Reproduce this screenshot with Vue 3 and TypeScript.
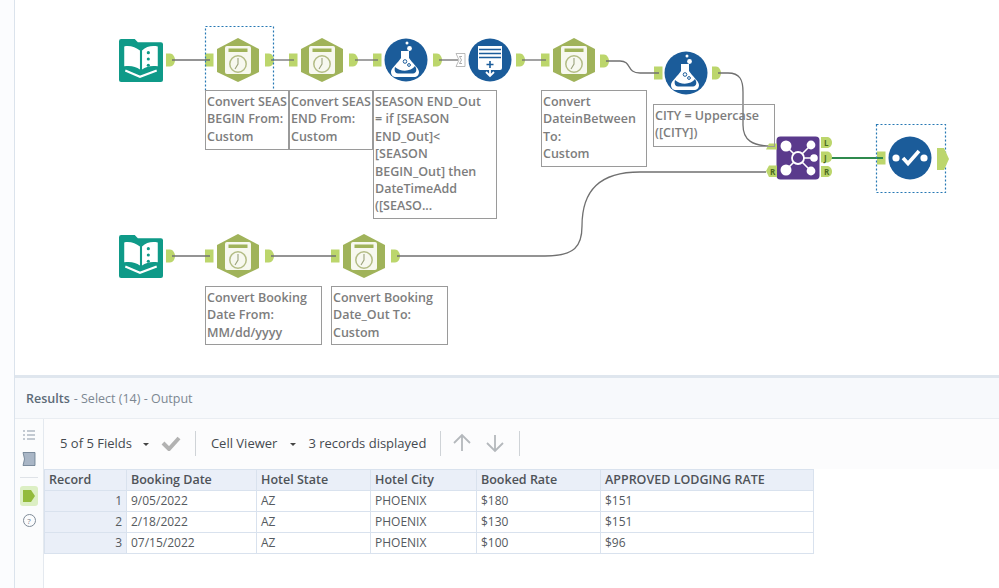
<script setup lang="ts">
type Tool = { kind: string; x: number; y: number }
type Note = { x: number; y: number; w: number; h: number; lines: string[] }

const tools: Tool[] = [
  { kind: 'book', x: 141, y: 60 },
  { kind: 'hex', x: 238, y: 60 },
  { kind: 'hex', x: 322, y: 60 },
  { kind: 'flask', x: 406, y: 60 },
  { kind: 'summarize', x: 490, y: 60 },
  { kind: 'hex', x: 574, y: 60 },
  { kind: 'flask', x: 686, y: 73 },
  { kind: 'join', x: 798, y: 158 },
  { kind: 'check', x: 910, y: 158 },
  { kind: 'book', x: 141, y: 256 },
  { kind: 'hex', x: 238, y: 256 },
  { kind: 'hex', x: 364, y: 256 },
]

const outAnchors = [
  [166, 60], [265, 60], [349, 60], [433, 60], [516, 60], [600, 61], [712, 73],
  [166, 256], [265, 256], [391, 256],
]
const inAnchors = [
  [205, 60], [289, 60], [373, 60], [541, 60], [654, 73], [877, 158], [205, 256], [331, 256],
]

const wires = [
  'M172 60H210', 'M271 60H294', 'M355 60H378', 'M439 60H458', 'M522 60H546',
  'M606 61H620C632 61 626 73 640 73H659',
  'M718 73H728C740 73 743 80 743 92V125C743 140 752 146 772 146',
  'M172 256H210', 'M271 256H336',
  'M397 256H545C575 256 582 246 582 226C582 190 600 172 640 172H766',
]

const notes: Note[] = [
  { x: 205, y: 90, w: 84, h: 60, lines: ['Convert SEAS', 'BEGIN From:', 'Custom'] },
  { x: 289, y: 90, w: 84, h: 60, lines: ['Convert SEAS', 'END From:', 'Custom'] },
  {
    x: 373, y: 90, w: 124, h: 129,
    lines: ['SEASON END_Out', '= if [SEASON', 'END_Out]<', '[SEASON', 'BEGIN_Out] then', 'DateTimeAdd', '([SEASO...'],
  },
  { x: 541, y: 90, w: 106, h: 77, lines: ['Convert', 'DateinBetween', 'To:', 'Custom'] },
  { x: 653, y: 104, w: 122, h: 43, lines: ['CITY = Uppercase', '([CITY])'] },
  { x: 205, y: 286, w: 117, h: 59, lines: ['Convert Booking', 'Date From:', 'MM/dd/yyyy'] },
  { x: 331, y: 286, w: 117, h: 59, lines: ['Convert Booking', 'Date_Out To:', 'Custom'] },
]

// the svg and the notes share page coordinates, the canvas starts after the 15px edge
const noteStyle = (n: Note) => ({
  left: `${n.x - 15}px`,
  top: `${n.y}px`,
  width: `${n.w}px`,
  height: `${n.h}px`,
})

const columns = ['Record', 'Booking Date', 'Hotel State', 'Hotel City', 'Booked Rate', 'APPROVED LODGING RATE']
const rows = [
  [1, '9/05/2022', 'AZ', 'PHOENIX', '$180', '$151'],
  [2, '2/18/2022', 'AZ', 'PHOENIX', '$130', '$151'],
  [3, '07/15/2022', 'AZ', 'PHOENIX', '$100', '$96'],
]
</script>

<template>
  <div class="app">
    <div class="edge"></div>
    <div class="main">
      <div class="canvas">
        <svg class="flow" width="984" height="375" viewBox="15 0 984 375">
          <defs>
            <symbol id="hex" viewBox="-22 -22 44 44" overflow="visible">
              <path d="M0-22L21-11V12L0 22L-21 12V-11Z" fill="#a0b35a" />
              <rect x="-13" y="-14" width="26" height="28" rx="2" fill="#f7f8ef" />
              <rect x="-9.5" y="-11.5" width="19" height="3.5" fill="#a0b35a" />
              <circle cx="0" cy="4" r="8.2" fill="none" stroke="#b3bc85" stroke-width="1.5" />
              <path d="M0-2V4L-3 9" fill="none" stroke="#9ba27c" stroke-width="1.1" />
            </symbol>
            <symbol id="book" viewBox="-21 -21 42 42" overflow="visible">
              <path d="M-21-18a2 2 0 0 1 2-2H-6L-3-17H19a2 2 0 0 1 2 2V19a2 2 0 0 1-2 2H-19a2 2 0 0 1-2-2Z" fill="#0f9a88" />
              <path d="M-16-13C-10-14-5-12-1-9V9C-5 6-10 5-16 6Z" fill="#fff" />
              <path d="M1-9C5-13 10-14 16-13V6C10 5 5 6 1 9Z" fill="#fff" />
              <circle cx="7" cy="-7" r="1.5" fill="#0f9a88" />
              <circle cx="7" cy="-1" r="1.5" fill="#0f9a88" />
              <circle cx="7" cy="5" r="1.5" fill="#0f9a88" />
              <path d="M-15 10L-1 16L15 10" fill="none" stroke="#fff" stroke-width="2" />
            </symbol>
            <symbol id="flask" viewBox="-22 -22 44 44" overflow="visible">
              <circle r="21.5" fill="#1b5c9a" />
              <circle cx="1" cy="-17" r="1.5" fill="#fff" />
              <circle cx="3.5" cy="-11.5" r="2.4" fill="#fff" />
              <path d="M-5-9H3V-2C6 3 13 8 13 12C13 15 11 17 8 17H-10C-13 17-15 15-15 12C-15 8-8 3-5-2Z" fill="#fff" />
              <path d="M-11 7C-6 12 5 12 9 6C11 9 11 13 7 13.5H-8C-11 13.5-12 10-11 7Z" fill="#1b5c9a" />
              <circle cx="-1" cy="1.5" r="1.8" fill="none" stroke="#1b5c9a" stroke-width="1" />
              <circle cx="3" cy="5" r="1.4" fill="none" stroke="#1b5c9a" stroke-width="1" />
            </symbol>
            <symbol id="summarize" viewBox="-22 -22 44 44" overflow="visible">
              <circle r="21.5" fill="#1b5c9a" />
              <path d="M-12-14H12V8a2 2 0 0 1-2 2H-10a2 2 0 0 1-2-2Z" fill="#fff" />
              <path d="M-11-10.5H11M-11-6.5H11M-11-2.5H11" stroke="#1b5c9a" stroke-width="1.4" />
              <path d="M0 1V8M-3.5 4.5H3.5" stroke="#1b5c9a" stroke-width="1.6" />
              <path d="M0 10V15M-4 12L0 16L4 12" fill="none" stroke="#fff" stroke-width="1.8" />
            </symbol>
            <symbol id="check" viewBox="-22 -22 44 44" overflow="visible">
              <circle r="21.5" fill="#1b5c9a" />
              <circle cx="-14" cy="0" r="3.6" fill="#fff" />
              <circle cx="14" cy="0" r="3.6" fill="#fff" />
              <path d="M-7 0L-2 5.5L9-7" fill="none" stroke="#fff" stroke-width="3.6" />
            </symbol>
            <symbol id="join" viewBox="-22 -22 44 44" overflow="visible">
              <rect x="-21.5" y="-21.5" width="43" height="43" rx="4" fill="#5a3a8c" />
              <path d="M-12-12L12 12M12-12L-12 12M0 0H15" stroke="#fff" stroke-width="1.6" />
              <circle r="6" fill="#5a3a8c" stroke="#fff" stroke-width="1.8" />
              <circle cx="-12" cy="-12" r="5.5" fill="#fff" />
              <circle cx="-12" cy="12" r="5.5" fill="#fff" />
              <circle cx="13" cy="-13" r="4.4" fill="#fff" />
              <circle cx="13" cy="13" r="4.4" fill="#fff" />
              <circle cx="16" cy="0" r="3.8" fill="#fff" />
            </symbol>
          </defs>

          <g v-for="(a, i) in outAnchors" :key="'o' + i" :transform="`translate(${a[0]} ${a[1]})`">
            <path d="M0-6.5H4C7-6.5 9-3 9 0C9 3 7 6.5 4 6.5H0Z" class="anchor" />
          </g>
          <rect v-for="(a, i) in inAnchors" :key="'i' + i" :x="a[0]" :y="a[1] - 6.5" width="8.5" height="13" class="anchor" />
          <path d="M456 53.5H465V66.5H456L459 60Z" fill="#fff" stroke="#a9a9a9" stroke-width="0.8" />
          <path d="M462 56.5H459.5L461.5 60L459.5 63.5H462" fill="none" stroke="#8a8a8a" stroke-width="0.7" />

          <path v-for="d in wires" :key="d" :d="d" class="wire" />
          <path d="M830 158H883" class="wire wire-on" />

          <use
            v-for="(t, i) in tools"
            :key="'t' + i"
            :href="`#${t.kind}`"
            :x="t.x - 22"
            :y="t.y - 22"
            width="44"
            height="44"
          />

          <!-- join anchors -->
          <path d="M766 149.5L769 143.5H777V149.5Z" class="anchor" />
          <path d="M766 171L769 165.5H777V177H769Z" class="anchor" />
          <text x="770" y="175" class="pin">R</text>
          <g v-for="(p, i) in [['L', 142.5], ['J', 157], ['R', 171.5]]" :key="'p' + i">
            <path :transform="`translate(821 ${p[1]})`" d="M0-5.5H6C9-5.5 11-3 11 0C11 3 9 5.5 6 5.5H0Z" class="anchor" />
            <text x="824" :y="Number(p[1]) + 3.5" class="pin">{{ p[0] }}</text>
          </g>

          <rect x="205.5" y="26.5" width="68" height="64" class="picked" />
          <rect x="876.5" y="124.5" width="69" height="68" class="picked" />
          <path d="M937 148H944L949 159L944 170H937Z" class="anchor" />
        </svg>

        <div v-for="(n, i) in notes" :key="i" class="note" :style="noteStyle(n)">
          <div v-for="line in n.lines" :key="line">{{ line }}</div>
        </div>
      </div>

      <div class="results-head"><b>Results</b> - Select (14) - Output</div>

      <div class="results-body">
        <aside class="rail">
          <svg width="14" height="14" viewBox="0 0 14 14" class="rail-list">
            <path d="M1 3h2M1 7h2M1 11h2M5 3h8M5 7h8M5 11h8" stroke="#8b98a8" stroke-width="1.2" />
          </svg>
          <svg width="16" height="16" viewBox="0 0 16 16" class="rail-config">
            <path d="M2 1.5H14V14.5H2L3.5 8Z" fill="#a9b6c6" stroke="#66788c" stroke-width="0.8" />
          </svg>
          <div class="rail-sep"></div>
          <div class="rail-on">
            <svg width="14" height="14" viewBox="0 0 14 14">
              <path d="M1 1H9L13 7L9 13H1Z" fill="#93bb3c" />
            </svg>
          </div>
          <div class="rail-help">?</div>
        </aside>

        <div class="content">
          <div class="toolbar">
            <span class="tool-text">5 of 5 Fields</span>
            <span class="caret"></span>
            <svg width="20" height="16" viewBox="0 0 20 16" class="tick">
              <path d="M2 8L8 14L18 3" fill="none" stroke="#b2b2b2" stroke-width="4" />
            </svg>
            <span class="bar"></span>
            <span class="tool-text">Cell Viewer</span>
            <span class="caret caret-b"></span>
            <span class="tool-text">3 records displayed</span>
            <span class="bar bar-b"></span>
            <svg width="20" height="20" viewBox="0 0 20 20" class="arrow">
              <path d="M10 18V3M2 10L10 2L18 10" fill="none" stroke="#b4b8bc" stroke-width="1.8" />
            </svg>
            <svg width="20" height="20" viewBox="0 0 20 20" class="arrow arrow-b">
              <path d="M10 2V17M2 10L10 18L18 10" fill="none" stroke="#b4b8bc" stroke-width="1.8" />
            </svg>
            <span class="bar bar-c"></span>
          </div>

          <table class="grid">
            <colgroup>
              <col style="width: 82px" />
              <col style="width: 130px" />
              <col style="width: 114px" />
              <col style="width: 106px" />
              <col style="width: 124px" />
              <col style="width: 213px" />
            </colgroup>
            <thead>
              <tr>
                <th v-for="c in columns" :key="c">{{ c }}</th>
              </tr>
            </thead>
            <tbody>
              <tr v-for="r in rows" :key="r[0]">
                <td v-for="(v, i) in r" :key="i" :class="{ num: i === 0 }">{{ v }}</td>
              </tr>
            </tbody>
          </table>
        </div>
      </div>
    </div>
  </div>
</template>

<style scoped>
.app {
  display: flex;
  width: 999px;
  height: 588px;
  overflow: hidden;
  background: #fff;
  font-family: 'Open Sans', 'Noto Sans', sans-serif;
  color: #4a4f55;
}

.edge {
  width: 14px;
  flex: none;
  background: #fbfcfe;
  border-right: 1px solid #dbe3ec;
}

.main {
  flex: 1;
  display: flex;
  flex-direction: column;
  min-width: 0;
}

.canvas {
  position: relative;
  height: 375px;
  flex: none;
  background: #fff;
  border-bottom: 3px solid #dfe6ee;
  box-sizing: content-box;
}

.flow {
  position: absolute;
  left: 0;
  top: 0;
}

.wire {
  fill: none;
  stroke: #707070;
  stroke-width: 1.3;
}

.wire-on {
  stroke: #2f8a4e;
  stroke-width: 2;
}

.anchor {
  fill: #bcd66c;
}

.pin {
  font-size: 8px;
  font-weight: 700;
  fill: #4c6b1e;
}

.picked {
  fill: none;
  stroke: #2678b4;
  stroke-width: 1.2;
  stroke-dasharray: 2 2;
}

.note {
  position: absolute;
  box-sizing: border-box;
  border: 1px solid #9a9a9a;
  padding: 2px 1px;
  overflow: hidden;
  font-size: 12.5px;
  font-weight: 600;
  line-height: 17.4px;
  color: #7d7d7d;
  white-space: nowrap;
}

.results-head {
  height: 40px;
  flex: none;
  display: flex;
  align-items: center;
  gap: 4px;
  padding-left: 11px;
  background: #f7f9fc;
  border-bottom: 1px solid #e9edf2;
  font-size: 12.5px;
  color: #7c8792;
}

.results-head b {
  font-weight: 600;
  color: #5d6b78;
}

.results-body {
  flex: 1;
  display: flex;
  min-height: 0;
}

.rail {
  width: 28px;
  flex: none;
  display: flex;
  flex-direction: column;
  align-items: center;
  background: #fbfcfd;
  border-right: 1px solid #e4e9ef;
}

.rail-list {
  margin-top: 9px;
}

.rail-config {
  margin-top: 9px;
}

.rail-sep {
  width: 18px;
  height: 1px;
  margin-top: 10px;
  background: #dfe3e8;
}

.rail-on {
  width: 18px;
  height: 20px;
  margin-top: 8px;
  display: flex;
  align-items: center;
  justify-content: center;
  border-radius: 3px;
  background: #dcefc4;
}

.rail-help {
  width: 11px;
  height: 11px;
  margin-top: 8px;
  border: 1px solid #7f8b98;
  border-radius: 50%;
  font-size: 8px;
  line-height: 11px;
  text-align: center;
  color: #6f7b88;
}

.content {
  flex: 1;
  min-width: 0;
  display: flex;
  flex-direction: column;
}

.toolbar {
  height: 50px;
  flex: none;
  box-sizing: border-box;
  display: flex;
  align-items: center;
  padding: 0 0 2px 16px;
  background: #fcfcfd;
  font-size: 13px;
  color: #454a50;
}

.tool-text {
  white-space: nowrap;
}

.caret {
  width: 0;
  height: 0;
  margin: 2px 0 0 11px;
  border: 3px solid transparent;
  border-top: 3px solid #444;
  border-bottom: 0;
}

.caret-b {
  margin-left: 13px;
}

.tick {
  margin-left: 12px;
}

.bar {
  width: 1px;
  height: 25px;
  margin: 0 15px 0 14px;
  background: #cfd3d7;
}

.caret + .tool-text {
  margin-left: 12px;
}

.bar-b {
  margin: 0 11px 0 14px;
}

.arrow-b {
  margin-left: 13px;
}

.bar-c {
  margin-left: 14px;
}

.grid {
  width: 769px;
  border-collapse: collapse;
  table-layout: fixed;
  font-size: 12px;
}

.grid th,
.grid td {
  height: 21px;
  padding: 0 4px;
  border: 1px solid #d9e2ee;
  box-sizing: border-box;
  text-align: left;
  white-space: nowrap;
  line-height: 18px;
}

.grid th {
  font-size: 12.5px;
  font-weight: 600;
  color: #4f5358;
  background: #eaeff8;
}

.grid td {
  color: #555a60;
}

.grid td.num {
  text-align: right;
  background: #eaeff8;
}
</style>
